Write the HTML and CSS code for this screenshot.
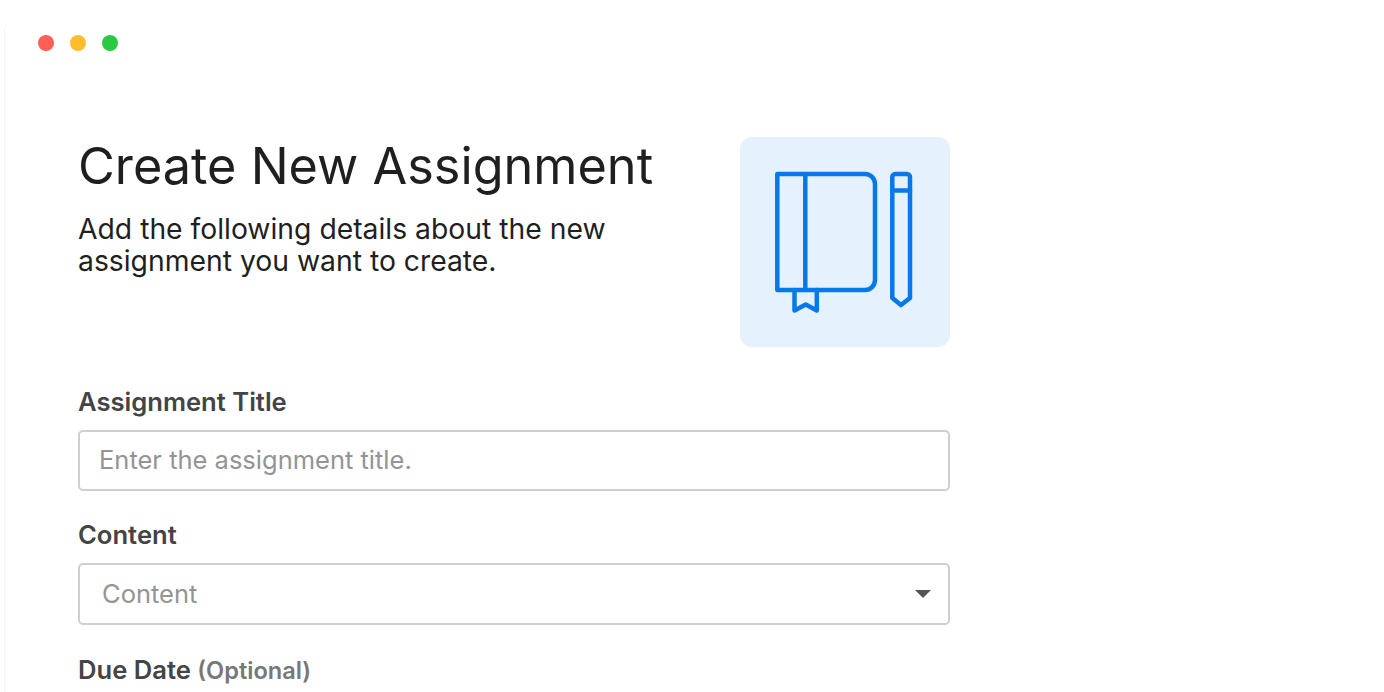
FILE: index.html
```html
<!DOCTYPE html>
<html lang="en">
<head>
    <meta charset="UTF-8">
    <meta name="viewport" content="width=device-width, initial-scale=1.0">
    <title>Create New Assignment</title>
    <link rel="stylesheet" href="styles.css">
</head>
<body>
    <div class="window">
        <div class="dots">
            <span class="dot red"></span>
            <span class="dot yellow"></span>
            <span class="dot green"></span>
        </div>
        <div class="content">
            <div class="header">
                <div class="intro">
                    <h1>Create New Assignment</h1>
                    <p>Add the following details about the new assignment you want to create.</p>
                </div>
                <div class="icon-box">
                    <svg width="210" height="210" viewBox="0 0 210 210" fill="none" stroke="#0679ea" stroke-width="4.5" stroke-linejoin="round" stroke-linecap="round">
                        <path d="M37.300 37H125a10 10 0 0 1 10 10V143a10 10 0 0 1-10 10H37.300Z"/>
                        <path d="M65.300 37V153"/>
                        <path d="M54.500 153V173.500L65.700 167.500L76.800 173.500V153"/>
                        <path d="M152.300 40a3 3 0 0 1 3-3H167a3 3 0 0 1 3 3V161L161 168L152.300 161Z"/>
                        <path d="M152.300 53.500H170"/>
                    </svg>
                </div>
            </div>
            <form class="form">
                <label for="title">Assignment Title</label>
                <input type="text" id="title" class="field" placeholder="Enter the assignment title.">

                <label for="type">Content</label>
                <div class="select" id="type">
                    <span>Content</span>
                    <span class="caret"></span>
                </div>

                <label for="due">Due Date <span class="optional">(Optional)</span></label>
            </form>
        </div>
    </div>
</body>
</html>
```

FILE: styles.css
```css
html, body {
    height: 100%;
}

body {
    margin: 0;
    background: #fff;
    color: #1f1f1f;
    font-family: "Inter", "Liberation Sans", sans-serif;
    overflow: hidden;
}

.window {
    box-sizing: border-box;
    height: 692px;
    margin: 22px 0 0 4px;
    padding: 13px 0 0 33px;
    border-left: 1px solid #f6f6f6;
    border-top-left-radius: 8px;
}

.dots {
    display: flex;
    gap: 16px;
}

.dot {
    width: 16px;
    height: 16px;
    border-radius: 50%;
}

.red { background: #ff5f57; }
.yellow { background: #ffbd2e; }
.green { background: #28ca42; }

.content {
    width: 872px;
    margin: 86px 0 0 40px;
}

.header {
    display: flex;
    justify-content: space-between;
}

h1 {
    margin: 0;
    font-size: 50.4px;
    font-weight: 400;
    line-height: 58px;
}

.intro p {
    width: 560px;
    margin: 18px 0 0;
    font-size: 28.3px;
    line-height: 32px;
}

.icon-box {
    width: 210px;
    height: 210px;
    background: #e5f1fc;
    border-radius: 12px;
}

.icon-box svg {
    display: block;
}

.form {
    margin-top: 42px;
}

.form label {
    display: block;
    margin-bottom: 15px;
    color: #444;
    font-size: 25.6px;
    font-weight: 600;
    line-height: 26px;
}

.optional {
    color: #777;
    font-size: 23.6px;
}

.field, .select {
    box-sizing: border-box;
    display: flex;
    align-items: center;
    width: 100%;
    border: 2px solid #cfcfcf;
    border-radius: 5px;
    background: #fff;
    color: #949494;
    font-family: inherit;
    font-size: 25.5px;
}

.field {
    height: 61px;
    margin-bottom: 31px;
    padding: 0 19px 2px;
}

.field::placeholder {
    color: #949494;
}

.select {
    justify-content: space-between;
    height: 62px;
    margin-bottom: 32px;
    padding: 0 17px 0 22px;
}

.select span:first-child {
    margin-bottom: 1px;
}

.caret {
    width: 0;
    height: 0;
    border-left: 8px solid transparent;
    border-right: 8px solid transparent;
    border-top: 8px solid #555;
}
```
